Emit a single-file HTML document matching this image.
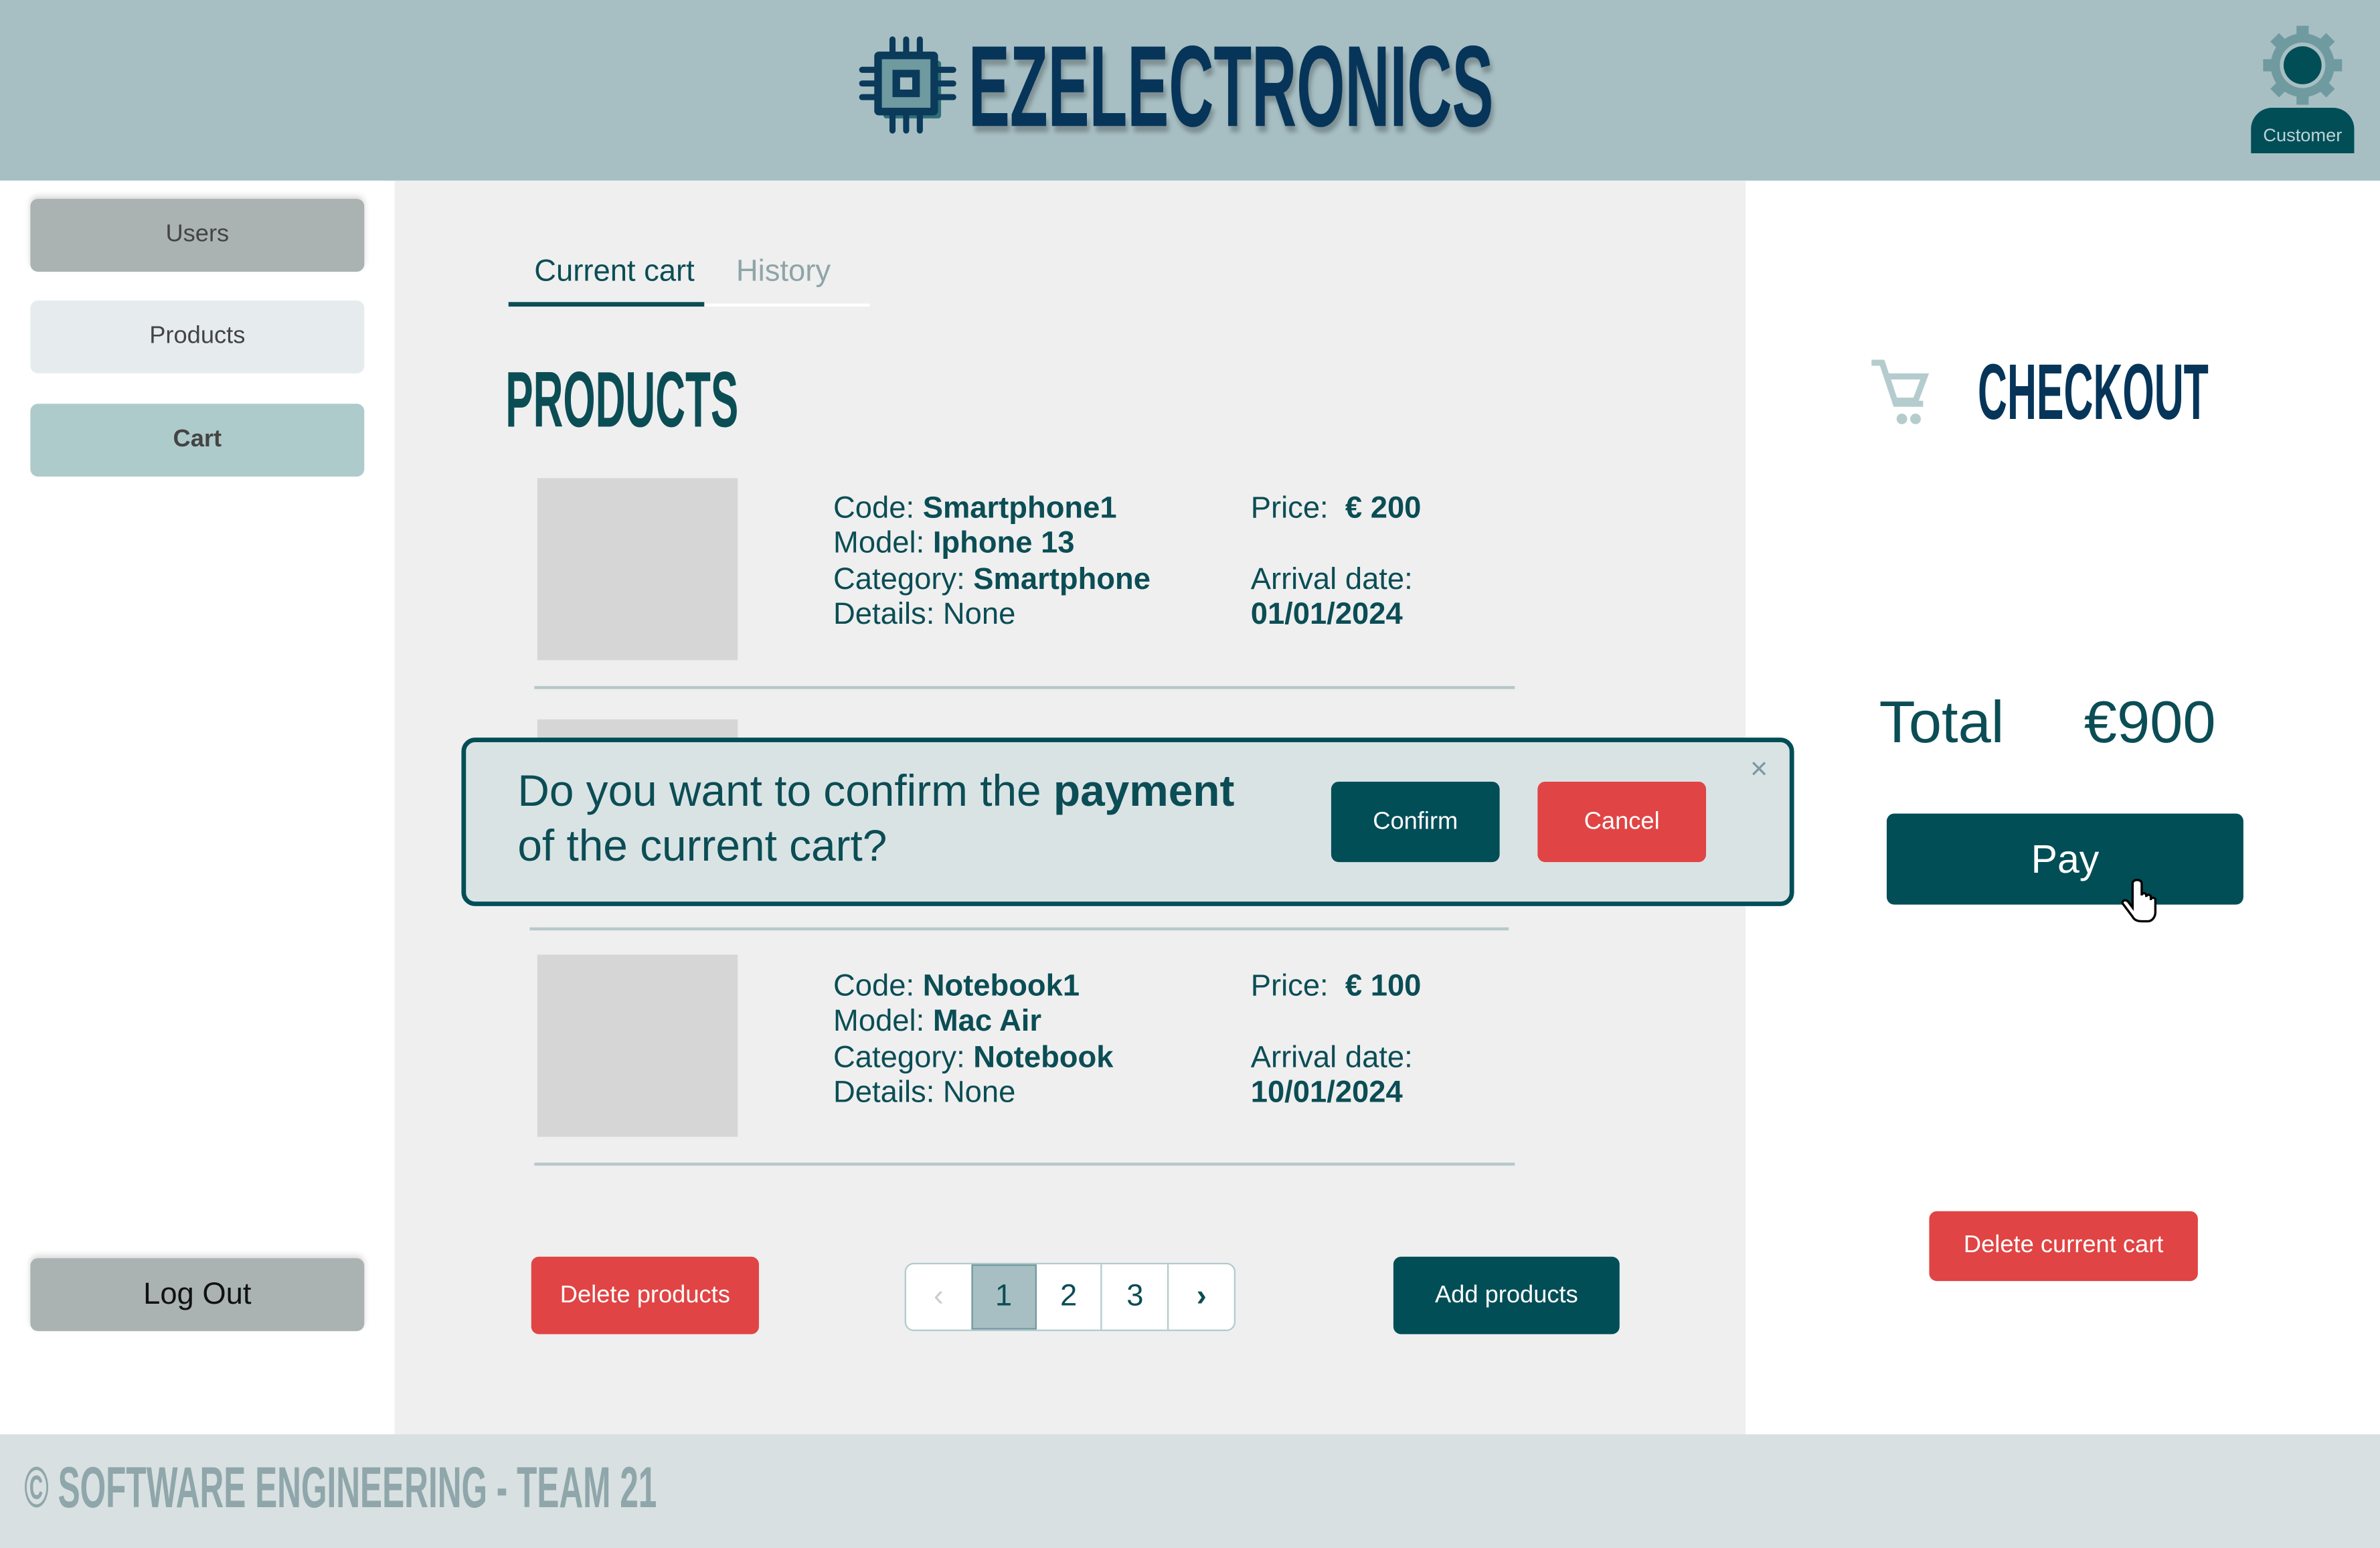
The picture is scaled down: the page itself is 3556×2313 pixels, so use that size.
<!DOCTYPE html>
<html><head><meta charset="utf-8"><style>
html,body{margin:0;padding:0;width:3556px;height:2312px;overflow:hidden;background:#fff}
#r{position:absolute;left:0;top:0;width:1568px;height:1020px;transform:scale(2.26786);transform-origin:0 0;font-family:"Liberation Sans",sans-serif;background:#fff}
.a{position:absolute}
.cond{display:inline-block;font-weight:bold;transform-origin:0 0;white-space:nowrap}
.btn{position:absolute;border-radius:5px;color:#fff;font-size:16px;display:flex;align-items:center;justify-content:center}
.side{position:absolute;left:20px;width:220px;height:48px;border-radius:5px;display:flex;align-items:center;justify-content:center;font-size:16px;color:#444;box-shadow:0 -2px 4px rgba(0,0,0,.15)}
.t{position:absolute;font-size:20px;color:#0b4d55;line-height:23.3px;white-space:nowrap}
.t b{color:#0b4d55}
.img{position:absolute;left:354px;width:132px;background:#d6d6d6}
.line{position:absolute;height:2px;background:#b7c8ca}
</style></head><body><div id="r">
<div class="a" style="left:0;top:0;width:1568px;height:119px;background:#a7bfc3"></div>
<svg class="a" style="left:566px;top:24px" width="66" height="66" viewBox="0 0 66 66">
<g fill="#2e6f78" transform="translate(4,4)"><rect x="12" y="12" width="38" height="38" rx="2"/></g>
<g fill="#0b3a5a"><rect x="10" y="10" width="42" height="42" rx="3"/>
<rect x="20" y="0" width="4" height="14" rx="2"/><rect x="29" y="0" width="4" height="14" rx="2"/><rect x="38" y="0" width="4" height="14" rx="2"/>
<rect x="20" y="48" width="4" height="16" rx="2"/><rect x="29" y="48" width="4" height="16" rx="2"/><rect x="38" y="48" width="4" height="16" rx="2"/>
<rect x="0" y="20" width="14" height="4" rx="2"/><rect x="0" y="29" width="14" height="4" rx="2"/><rect x="0" y="38" width="14" height="4" rx="2"/>
<rect x="48" y="20" width="16" height="4" rx="2"/><rect x="48" y="29" width="16" height="4" rx="2"/><rect x="48" y="38" width="16" height="4" rx="2"/></g>
<rect x="15" y="15" width="32" height="32" fill="#6e9aa0"/><rect x="22" y="22" width="18" height="18" fill="#0b3a5a"/><rect x="27" y="27" width="8" height="8" fill="#a7bfc3"/>
</svg>
<div class="a" style="left:638px;top:18px;font-size:76px;line-height:80px;color:#063559;text-shadow:3px 4px 4px rgba(0,0,0,.25)"><span class="cond" style="transform:scaleX(0.539)">EZELECTRONICS</span></div>
<svg class="a" style="left:1490px;top:16px" width="54" height="54" viewBox="0 0 54 54">
<g fill="#6f9aa0"><circle cx="27" cy="27" r="21"/>
<g><rect x="23" y="1" width="8" height="8"/><rect x="23" y="45" width="8" height="8"/><rect x="1" y="23" width="8" height="8"/><rect x="45" y="23" width="8" height="8"/>
<rect x="23" y="1" width="8" height="8" transform="rotate(45 27 27)"/><rect x="23" y="45" width="8" height="8" transform="rotate(45 27 27)"/><rect x="1" y="23" width="8" height="8" transform="rotate(45 27 27)"/><rect x="45" y="23" width="8" height="8" transform="rotate(45 27 27)"/></g></g>
<circle cx="27" cy="27" r="15" fill="#a7bfc3"/><circle cx="27" cy="27" r="12.5" fill="#014e57"/></svg>
<div class="a" style="left:1483px;top:71px;width:68px;height:30px;background:#014e57;border-radius:14px 14px 0 0;color:#bcd3d6;font-size:12px;text-align:center;line-height:36px">Customer</div>
<div class="a" style="left:0;top:119px;width:260px;height:826px;background:#fff;border-radius:0 8px 8px 0"></div>
<div class="side" style="top:131px;background:#aab3b1">Users</div>
<div class="side" style="top:198px;background:#e6ecee;box-shadow:none">Products</div>
<div class="side" style="top:266px;background:#aecbcb;box-shadow:none;font-weight:bold">Cart</div>
<div class="side" style="top:829px;background:#aab3b1;font-size:20px;color:#111">Log Out</div>
<div class="a" style="left:260px;top:119px;width:890px;height:826px;background:#efefef"></div>
<div class="a" style="left:352px;top:168px;font-size:20px;color:#0b4d55">Current cart</div>
<div class="a" style="left:485px;top:168px;font-size:20px;color:#8fa4a7">History</div>
<div class="a" style="left:335px;top:200px;width:238px;height:2px;background:#fff"></div>
<div class="a" style="left:335px;top:199px;width:129px;height:3px;background:#0b4d55"></div>
<div class="a" style="left:333px;top:237px;font-size:52px;line-height:54px;color:#0b4d55"><span class="cond" style="transform:scaleX(0.526)">PRODUCTS</span></div>
<div class="img" style="top:315px;height:120px"></div>
<div class="t" style="left:549px;top:324px">Code: <b>Smartphone1</b><br>Model: <b>Iphone 13</b><br>Category: <b>Smartphone</b><br>Details: None</div>
<div class="t" style="left:824px;top:324px">Price:&nbsp; <b>€ 200</b><br><br>Arrival date:<br><b>01/01/2024</b></div>
<div class="line" style="left:352px;top:452px;width:646px"></div>
<div class="img" style="top:474px;height:12px"></div>
<div class="line" style="left:349px;top:611px;width:645px"></div>
<div class="img" style="top:629px;height:120px"></div>
<div class="t" style="left:549px;top:639px">Code: <b>Notebook1</b><br>Model: <b>Mac Air</b><br>Category: <b>Notebook</b><br>Details: None</div>
<div class="t" style="left:824px;top:639px">Price:&nbsp; <b>€ 100</b><br><br>Arrival date:<br><b>10/01/2024</b></div>
<div class="line" style="left:352px;top:766px;width:646px"></div>
<div class="btn" style="left:350px;top:828px;width:150px;height:51px;background:#e04444">Delete products</div>
<div class="a" style="left:596px;top:832px;width:216px;height:43px;border:1.5px solid #b2cacc;border-radius:6px;background:#fff;overflow:hidden;display:flex;font-size:20px;color:#0b4d55">
<div style="width:43px;display:flex;align-items:center;justify-content:center;color:#ccc">&#8249;</div>
<div style="width:43px;display:flex;align-items:center;justify-content:center;background:#a7bfc3;border:1px solid #6f9aa0;box-sizing:border-box">1</div>
<div style="width:43px;display:flex;align-items:center;justify-content:center;border-right:1px solid #b2cacc">2</div>
<div style="width:43px;display:flex;align-items:center;justify-content:center;border-right:1px solid #b2cacc">3</div>
<div style="width:43px;display:flex;align-items:center;justify-content:center;font-weight:bold">&#8250;</div></div>
<div class="btn" style="left:918px;top:828px;width:149px;height:51px;background:#014e57">Add products</div>
<div class="a" style="left:304px;top:486px;width:872px;height:105px;border:3px solid #014e57;border-radius:9px;background:#dae3e4"></div>
<div class="a" style="left:341px;top:504px;font-size:29px;line-height:36px;color:#0b4d55;white-space:nowrap">Do you want to confirm the <b>payment</b><br>of the current cart?</div>
<div class="btn" style="left:877px;top:515px;width:111px;height:53px;background:#014e57">Confirm</div>
<div class="btn" style="left:1013px;top:515px;width:111px;height:53px;background:#e04444">Cancel</div>
<div class="a" style="left:1153px;top:496px;font-size:20px;color:#7a9aa0">×</div>
<svg class="a" style="left:1232px;top:236px" width="40" height="46" viewBox="0 0 40 46"><path d="M1 3H8L17 30H35M11 12H36L30 28H17" fill="none" stroke="#b5ccce" stroke-width="4"/><circle cx="21" cy="40" r="3.5" fill="#b5ccce"/><circle cx="30" cy="40" r="3.5" fill="#b5ccce"/></svg>
<div class="a" style="left:1303px;top:232px;font-size:52px;line-height:54px;color:#063559"><span class="cond" style="transform:scaleX(0.516)">CHECKOUT</span></div>
<div class="a" style="left:1238px;top:455px;font-size:39px;color:#0b4d55">Total</div>
<div class="a" style="left:1373px;top:455px;font-size:39px;color:#0b4d55">€900</div>
<div class="btn" style="left:1243px;top:536px;width:235px;height:60px;background:#014e57;font-size:26px">Pay</div>
<svg class="a" style="left:1393px;top:574px" width="30" height="36" viewBox="0 0 30 36"><path d="M12 8V24L9 20C7 18 4 20 6 22L12 30C13 32 15 33 18 33H22C25 33 27 30 27 27V19C27 17 24 17 24 19V17C24 15 21 15 21 17V16C21 14 18 14 18 16V8C18 5 12 5 12 8Z" fill="#fff" stroke="#000" stroke-width="1.5"/></svg>
<div class="btn" style="left:1271px;top:798px;width:177px;height:46px;background:#e04444">Delete current cart</div>
<div class="a" style="left:0;top:945px;width:1568px;height:75px;background:#d8e0e1"></div>
<div class="a" style="left:16px;top:961px;font-size:38px;line-height:40px;color:#8fa6aa"><span class="cond" style="transform:scaleX(0.575)">© SOFTWARE ENGINEERING - TEAM 21</span></div>
</div></body></html>
